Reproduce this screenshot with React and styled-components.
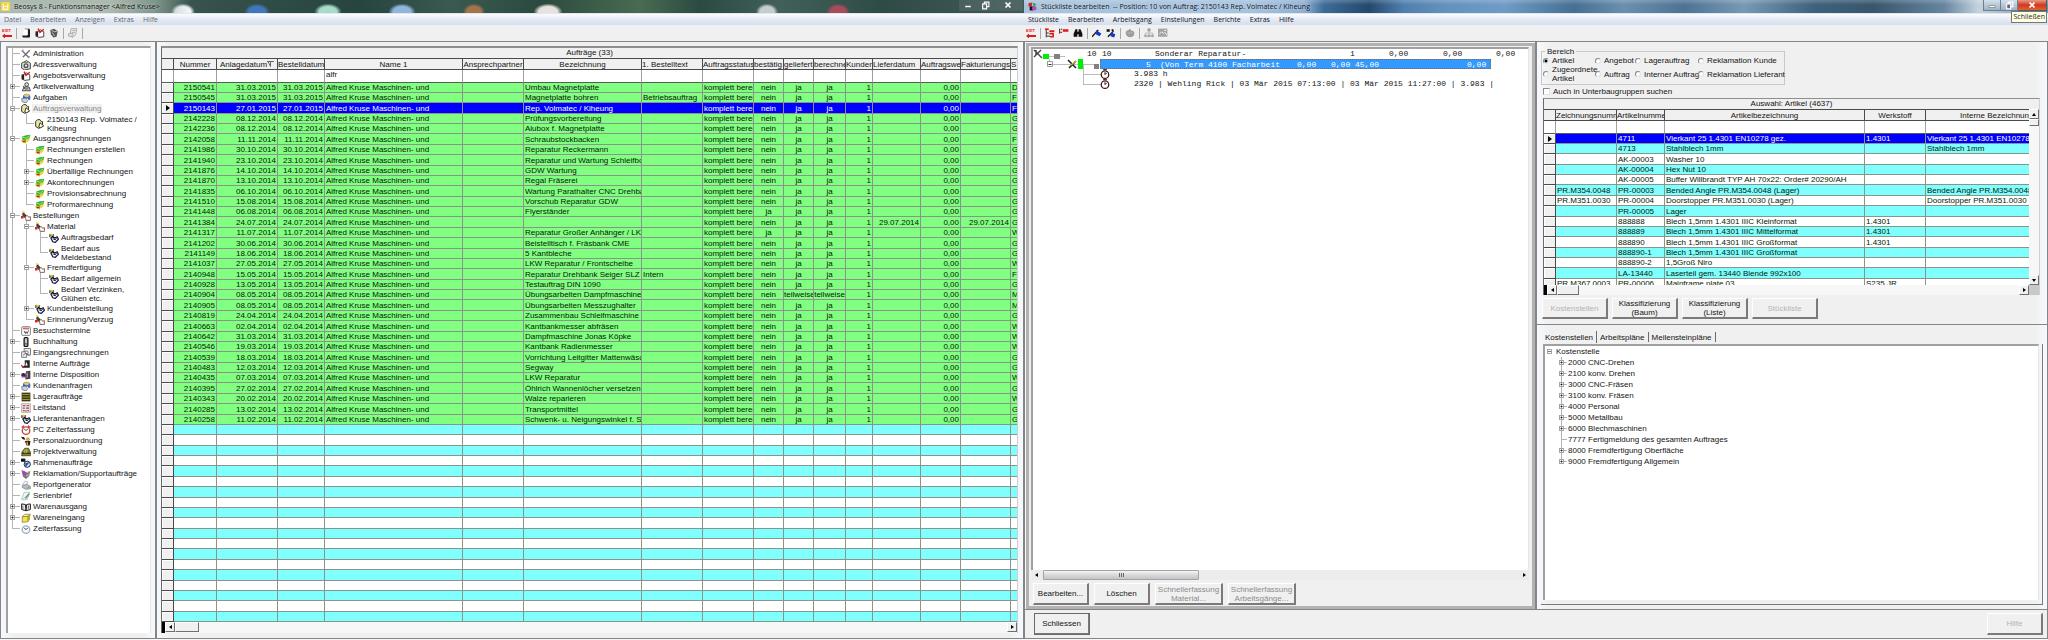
import React from "react";
import styled, { createGlobalStyle, css } from "styled-components";

const GlobalStyle = createGlobalStyle`
  *, *::before, *::after { box-sizing: border-box; }
  html, body { margin: 0; padding: 0; background: #f0f0f0; }
  body, button, input { font-family: "Liberation Sans", Arial, sans-serif; font-size: 8px; line-height: 9px; color: #141414; }
  button { cursor: default; }
`;

/* ---------- window chrome ---------- */

const Desktop = styled.main`
  display: grid;
  grid-template-columns: minmax(0, 1fr) minmax(0, 1fr);
  min-height: 100vh;
`;

const Window = styled.section`
  display: flex;
  flex-direction: column;
  min-width: 0;
  padding-bottom: 1px;
  background: #f4f7fb;
`;

const blob = (x, color, w = 20) =>
  `radial-gradient(ellipse ${w}px 10px at ${x}px 12px, ${color} 0 55%, transparent 85%)`;

const leftGlass = [
  "linear-gradient(90deg, rgba(178,190,178,.95) 0 110px, rgba(150,170,158,.75) 155px, transparent 190px)",
  blob(183, "#f2f6fa", 14),
  blob(257, "#3f77b8", 15),
  blob(328, "#a9dcc8", 16),
  blob(402, "#8fb6dc", 16),
  blob(474, "#a5734a", 13),
  blob(548, "#e7e2de", 17),
  blob(767, "#c3cdd2", 13),
  blob(838, "#a84a58", 14),
  "linear-gradient(90deg, #54706a 0, #35504a 220px, #27443f 360px, #3a5950 450px, #2b4a3f 540px, #4b6a52 640px, #2c4a42 700px, #42605a 780px, #2f4b46 880px, #425a5a 100%)",
].join(",");

const rightGlass = [
  "linear-gradient(180deg, rgba(255,255,255,.2), transparent 5px)",
  "linear-gradient(90deg, #a9c3dc 0, #a5c2df 230px, #8fb0d2 280px, #3d6b98 300px, #24486d 345px, #4f7fae 380px, #6391bd 420px, #6f9cc6 480px, #456f93 550px, #6b8fae 600px, #4d7394 660px, #7899b3 720px, #3e617c 790px, #38566c 850px, #6685a0 920px, #c5d3de 955px, #7691aa 100%)",
].join(",");

const TitleBar = styled.header`
  display: flex;
  align-items: center;
  height: 14px;
  padding-left: ${(p) => (p.$blue ? 4 : 1)}px;
  gap: 4px;
  background: ${(p) => (p.$blue ? rightGlass : leftGlass)};
  border-bottom: 1px solid #dfe7ef;
  h1 {
    margin: 0;
    font: 400 7px/12px "Open Sans", sans-serif;
    color: #0c141c;
    white-space: pre;
    text-shadow: 0 0 3px rgba(255, 255, 255, 0.7);
  }
`;

const Caption = styled.div`
  display: flex;
  align-self: flex-start;
  margin-left: auto;
  margin-right: 1px;
  position: relative;
`;

const CaptionButton = styled.button`
  width: ${(p) => p.$w}px;
  height: 11px;
  padding: 0;
  display: flex;
  align-items: center;
  justify-content: center;
  border: 1px solid ${(p) => (p.$glass ? "#6e8092" : "#4c615f")};
  border-top: 0;
  border-left: ${(p) => (p.$first ? "1px solid #6e8092" : 0)};
  background: ${(p) =>
    p.$danger
      ? "linear-gradient(#e89a86, #cf3a1c 50%, #e2603a)"
      : p.$glass
      ? "linear-gradient(#d5e0ea, #9db3c8)"
      : "rgba(255,255,255,.08)"};
`;

const Tooltip = styled.span`
  position: absolute;
  z-index: 2;
  top: 11px;
  right: 0;
  padding: 0 1px;
  border: 1px solid #767676;
  background: #ffffe1;
  font: 400 7px/10px "Open Sans", sans-serif;
  color: #2a2a2a;
`;

const MenuBar = styled.nav`
  display: flex;
  align-items: center;
  gap: 9px;
  height: 11px;
  padding-left: 4px;
  background: linear-gradient(#fbfcfe, #e6ebf5 45%, #d5ddef);
  button {
    padding: 0;
    border: 0;
    background: none;
    font: 400 7px/11px "Open Sans", sans-serif;
    color: ${(p) => (p.$muted ? "#62676e" : "#10141a")};
  }
`;

const ToolBar = styled.div`
  display: flex;
  align-items: center;
  gap: 4px;
  height: 16px;
  padding-left: 2px;
  background: #f0f0f0;
`;

const ToolButton = styled.button`
  display: flex;
  width: 10px;
  height: 12px;
  padding: 0;
  align-items: center;
  justify-content: center;
  border: 0;
  background: none;
  flex: none;
`;

const ToolSep = styled.span`
  width: 1px;
  height: 11px;
  background: #a8a8a8;
`;

/* ---------- panes ---------- */

const Columns = styled.div`
  display: grid;
  grid-template-columns: ${(p) => p.$cols};
  flex: 1;
  min-width: 0;
`;

const Pane = styled.div`
  display: flex;
  flex-direction: column;
  min-width: 0;
  padding: ${(p) => p.$pad || "4px 5px 5px 4px"};
  border: 1px solid #858585;
  border-bottom-width: ${(p) => (p.$openBottom ? 0 : 1)}px;
  background: linear-gradient(90deg, #f6f9fd, #f0f0f0 12px, #f0f0f0 calc(100% - 12px), #f6f9fd);
`;

const Sunken = styled.div`
  flex: 1;
  min-width: 0;
  border-top: 2px solid #a0a0a0;
  border-left: 2px solid #a0a0a0;
  border-right: 1px solid #e6e6e6;
  background: #fff;
`;

/* ---------- tree ---------- */

const TreeList = styled.ul`
  margin: 0;
  padding: 0;
  list-style: none;
`;

const TreeItem = styled.li`
  display: flex;
  align-items: stretch;
  height: ${(p) => (p.$tall ? 19 : 11)}px;
`;

const line = "#b4b4b4";

const Guide = styled.span`
  flex: none;
  width: ${(p) => p.$w}px;
  background: ${(p) =>
    p.$on ? `linear-gradient(${line}, ${line}) 4px 0 / 1px 100% no-repeat` : "none"};
`;

const Joint = styled.span`
  flex: none;
  display: flex;
  align-items: center;
  width: ${(p) => p.$w || 12}px;
  padding-left: 2px;
  background:
    linear-gradient(${line}, ${line}) 4px 0 / 1px ${(p) => (p.$root ? "0" : p.$last ? "50%" : "100%")} no-repeat,
    linear-gradient(${line}, ${line}) 4px 50% / ${(p) => (p.$root ? 0 : p.$w - 2)}px 1px no-repeat;
`;

const Expander = styled.button`
  width: 5px;
  height: 5px;
  padding: 0;
  border: 1px solid #a4a4a4;
  background:
    ${(p) =>
      p.$open
        ? "linear-gradient(#777, #777) center / 3px 1px no-repeat,"
        : `linear-gradient(#111, #111) center / 1px 1px no-repeat,
           linear-gradient(#999, #999) center / 3px 1px no-repeat,
           linear-gradient(#999, #999) center / 1px 3px no-repeat,`}
    #fff;
`;

const TreeIcon = styled.span`
  flex: none;
  display: flex;
  align-items: center;
  justify-content: center;
  width: 12px;
`;

const TreeLabel = styled.span`
  align-self: center;
  padding: 0 1px;
  white-space: pre;
  ${(p) => p.$selected && css`background: #f0f0f0; color: #8a8a8a;`}
`;

/* ---------- data grid ---------- */

const GridFrame = styled.div`
  display: flex;
  flex-direction: column;
  min-width: 0;
  border-top: ${(p) => (p.$thin ? 1 : 2)}px solid #8e8e8e;
  border-left: 1px solid #6a6a6a;
  border-right: 1px solid #d0d0d0;
  background: #fff;
`;

const GridTitle = styled.div`
  height: 10px;
  line-height: 10px;
  text-align: center;
  background: #f0f0f0;
`;

const GridView = styled.div`
  display: flex;
  min-width: 0;
  ${(p) => p.$h && css`height: ${p.$h}px; overflow: hidden;`}
`;

const Table = styled.table`
  flex: 1;
  width: 100%;
  min-width: 0;
  table-layout: fixed;
  border-collapse: separate;
  border-spacing: 0;
  th, td {
    padding: 0 1px;
    overflow: hidden;
    white-space: nowrap;
    font-weight: 400;
    line-height: 9px;
    text-overflow: clip;
  }
  thead th {
    height: 12px;
    padding: 0;
    border-top: 1px solid #4a4a4a;
    border-bottom: 1px solid #4a4a4a;
    border-right: 1px solid #4a4a4a;
    background: #f0f0f0;
  }
  thead td {
    height: 13px;
    border-right: 1px solid #a0a0a0;
    border-bottom: 1px solid #5a5a5a;
    vertical-align: top;
    background: #fff;
  }
  tbody td, tbody th {
    height: 10px;
    border-right: 1px solid #8a948a;
    border-bottom: 1px solid #8a948a;
  }
  tbody tr:nth-child(8n + 3) td,
  tbody tr:nth-child(8n + 6) td,
  tbody tr:nth-child(8n) td { height: 11px; }
  td:last-child, thead th:last-child { border-right: 0; }
`;

const HeaderCell = styled.th`
  text-align: ${(p) => p.$align || "center"};
`;

const rowColors = { green: "#80ff80", cyan: "#80ffff", white: "#ffffff", blue: "#0000ff" };

const Row = styled.tr`
  td { background: ${(p) => rowColors[p.$tone]}; color: ${(p) => (p.$tone === "blue" ? "#fff" : "#062006")}; }
  && th {
    padding: 0;
    background: #f0f0f0;
    border-right: 1px solid #4a4a4a;
    border-bottom: 1px solid #4a4a4a;
    box-shadow: inset 1px 1px #fff;
  }
`;

const Cell = styled.td`
  text-align: ${(p) => p.$align || "left"};
  && { padding: ${(p) => (p.$align === "center" ? "0" : p.$align === "right" ? "0 1px 0 0" : "0 0 0 1px")}; }
`;

const FilterInput = styled.input`
  display: block;
  width: 100%;
  height: 9px;
  padding: 0;
  border: 0;
  outline: 0;
  background: none;
`;

const Pointer = styled.i`
  display: block;
  width: 0;
  margin-left: 4px;
  border: 3px solid transparent;
  border-left: 4px solid #000;
  border-right: 0;
`;

/* ---------- scroll bars ---------- */

const HBar = styled.div`
  display: flex;
  height: ${(p) => p.$h || 11}px;
  background: ${(p) => (p.$modern ? "#ececec" : "#f7f7f7")};
`;

const BarCap = styled.span`
  width: 3px;
  background: #000;
`;

const raised = css`
  border: 1px solid #fff;
  border-right-color: #6f6f6f;
  border-bottom-color: #6f6f6f;
  background: #f0f0f0;
`;

const Arrow = styled.button`
  display: flex;
  flex: none;
  align-items: center;
  justify-content: center;
  width: 10px;
  height: 10px;
  padding: 0;
  ${(p) => (p.$flat ? css`border: 0; background: none;` : raised)}
  &::before {
    content: "";
    border: 2px solid transparent;
    ${(p) => p.$dir === "left" && css`border-right: 3px solid #000; border-left: 0;`}
    ${(p) => p.$dir === "right" && css`border-left: 3px solid #000; border-right: 0;`}
    ${(p) => p.$dir === "up" && css`border-bottom: 3px solid #000; border-top: 0;`}
    ${(p) => p.$dir === "down" && css`border-top: 3px solid #000; border-bottom: 0;`}
  }
`;

const Thumb = styled.span`
  width: ${(p) => p.$w}px;
  height: ${(p) => p.$h || 10}px;
  ${(p) =>
    p.$modern
      ? css`
          display: flex;
          align-items: center;
          justify-content: center;
          gap: 1px;
          margin-left: 2px;
          border: 1px solid #a3a3a3;
          border-radius: 1px;
          background: linear-gradient(#f5f5f5, #d9d9dc 50%, #c4c4c9);
          i { width: 1px; height: 4px; background: #666; }
        `
      : raised}
`;

const Grow = styled.span`
  flex: 1;
`;

const Corner = styled.span`
  width: 10px;
  background: #c8c8c8;
`;

const VBar = styled.div`
  display: flex;
  flex-direction: column;
  width: 10px;
  background: #f7f7f7;
`;

/* ---------- buttons, form ---------- */

const PushButton = styled.button`
  width: ${(p) => p.$w}px;
  height: ${(p) => p.$h || 22}px;
  padding: 0;
  border: 1px solid #fff;
  border-right: 2px solid #7a7a7a;
  border-bottom: 2px solid #7a7a7a;
  background: #f0f0f0;
  text-align: center;
  color: ${(p) => (p.$faint ? "#b4b4b4" : p.$dim ? "#8c8c8c" : "#141414")};
  white-space: pre;
  ${(p) => p.$default && css`outline: 1px solid #6a6a6a; outline-offset: -1px;`}
`;

const ButtonRow = styled.div`
  display: flex;
  gap: ${(p) => p.$gap}px;
  padding: ${(p) => p.$pad};
`;

const GrayFrame = styled.div`
  display: flex;
  flex-direction: column;
  flex: 1;
  min-width: 0;
  padding: 1px 3px 1px 2px;
  border: 3px solid #b2b2b2;
  background: #f0f0f0;
`;

const Fieldset = styled.fieldset`
  display: grid;
  grid-template-columns: 52px 40px 63px 85px;
  grid-template-rows: 9px 18px;
  align-items: center;
  width: 244px;
  height: 38px;
  margin: 0;
  padding: 0 1px;
  border: 1px solid #c8c8c8;
  legend { padding: 0 2px; margin-left: 2px; line-height: 9px; }
`;

const Choice = styled.label`
  display: flex;
  align-items: center;
  gap: 3px;
  white-space: pre;
  input {
    appearance: none;
    flex: none;
    width: ${(p) => (p.$box ? 7 : 6)}px;
    height: ${(p) => (p.$box ? 7 : 6)}px;
    margin: 0;
    border: 1px solid #8a8a8a;
    border-right-color: #e4e4e4;
    border-bottom-color: #e4e4e4;
    border-radius: ${(p) => (p.$box ? 0 : "50%")};
    background: #fff;
  }
  input:checked { background: radial-gradient(circle, #000 0 1px, #fff 2px); }
`;

const Tabs = styled.div`
  display: flex;
  align-items: center;
  height: 14px;
  padding-left: 1px;
`;

const Tab = styled.button`
  height: ${(p) => (p.$active ? 12 : 10)}px;
  padding: 0 3px;
  border: 0;
  border-right: 1px solid #6a6a6a;
  background: none;
`;

const TabPage = styled.div`
  display: flex;
  flex: 1;
  padding: 0 3px 4px 2px;
  border-right: 1px solid #7a7a7a;
  border-bottom: 1px solid #7a7a7a;
`;

const Footer = styled.footer`
  display: flex;
  justify-content: space-between;
  padding: 3px 4px 3px 9px;
  border: 1px solid #858585;
  background: #f0f0f0;
`;

/* ---------- parts list ---------- */

const PartRow = styled.div`
  display: flex;
  align-items: center;
  height: 10px;
  font: 400 8px/10px "Liberation Mono", "Courier New", monospace;
  white-space: pre;
`;

const PartLead = styled.span`
  flex: none;
  display: flex;
  width: ${(p) => p.$w}px;
  svg { flex: none; overflow: visible; }
`;

const PartText = styled.span`
  flex: none;
  width: ${(p) => (p.$w ? `${p.$w}px` : "auto")};
`;

const PartSelected = styled.span`
  display: flex;
  width: 391px;
  height: 10px;
  padding-left: 45px;
  background: #3399ff;
  border: 1px dotted #7a6a50;
  line-height: 9px;
  color: #fff;
`;

/* ---------- icons ---------- */

const Svg = ({ children, size = 10, w, h, box = "0 0 16 16" }) => (
  <svg width={w || size} height={h || size} viewBox={box} aria-hidden="true">
    {children}
  </svg>
);

const folder = (
  <g stroke="#222" strokeWidth="1.4">
    <path d="M1 4l3-3h4l2 3h2v8l-6 3-5-3z" fill="#e9e3a0" />
    <path d="M8 6l6 5-5 3-3-1z" fill="#fffbd0" />
  </g>
);
const money = (
  <g>
    <path d="M1 8l7 1v6l-5-1-2-2z" fill="#e0a92c" />
    <path d="M2 4l6-2 7-1-2 7-6 3-5-3z" fill="#35b32c" />
    <path d="M7 9l6-3 1 3-5 5z" fill="#f0cf4a" />
    <path d="M3 5l5 2 5-4" stroke="#a8ea86" fill="none" strokeWidth="1.5" />
    <path d="M3 12h4" stroke="#8b2f18" strokeWidth="1.5" />
  </g>
);
const order = (
  <g>
    <path d="M3 3l5 5" stroke="#222" fill="none" strokeWidth="2.4" />
    <path d="M1 5h5l2 4-3 2z" fill="#444" />
    <path d="M0 8h4v4H0z" fill="#d22" />
    <path d="M7 9l3-2 2 3 3-1v6H8z" fill="#fff" stroke="#7a3a3a" strokeWidth="1.3" />
    <path d="M2 1l4 2" stroke="#e0c82a" strokeWidth="2" />
  </g>
);
const hands = (
  <g>
    <path d="M3 8l3 6 4 1 5-5-2-4-4 2-3-2z" fill="#fff" stroke="#16184e" strokeWidth="2" />
    <path d="M0 5l8-2M1 2l8 6" stroke="#111" strokeWidth="1.8" />
    <path d="M1 1h4l2 3-4 1z" fill="#d8cf2e" />
    <path d="M6 9l4 2 2-3" stroke="#111" fill="none" strokeWidth="1.4" />
  </g>
);
const globe = (
  <g>
    <circle cx="9" cy="7" r="6" fill="#3d67c9" />
    <path d="M4 3l5-2 5 2-3 4-5-1z" fill="#e9c34c" />
    <path d="M1 9l6-1 4 4-3 4-6-2z" fill="#c9d4e6" stroke="#555" />
    <path d="M9 9l4 4" stroke="#f4f4f4" strokeWidth="2" />
  </g>
);
const clock = (ring) => (
  <g>
    <circle cx="8" cy="9" r="6" fill="#f6fbff" stroke={ring} strokeWidth="2.2" />
    <path d="M5 6l3 3 3-3" stroke="#234" fill="none" strokeWidth="1.5" />
  </g>
);
const drawer = (
  <g>
    <path d="M2 7l7-4 5 3v8l-8 1-4-2z" fill="#fff" stroke="#222" strokeWidth="1.3" />
    <path d="M5 1l3 6 6-5" stroke="#c22" strokeWidth="2.4" fill="none" />
    <path d="M1 5l4 1v8l-4-1z" fill="#222" />
  </g>
);

const icons = {
  tools: (
    <g stroke="#666" strokeWidth="2" fill="none">
      <path d="M2 3l11 11M14 2L3 13" />
      <path d="M1 4l3-3M11 14l3-2" stroke="#999" />
    </g>
  ),
  address: (
    <g>
      <path d="M1 5l8-4 6 4v9l-9 2-5-3z" fill="#ddd" stroke="#222" strokeWidth="1.3" />
      <circle cx="8" cy="9" r="4" fill="#555" />
      <circle cx="8" cy="9" r="1.7" fill="#eee" />
      <path d="M3 4h8" stroke="#5a9e38" strokeWidth="1.5" />
    </g>
  ),
  offer: drawer,
  article: (
    <g stroke="#333" strokeWidth="1.4" fill="#ddd">
      <circle cx="9" cy="4" r="3" />
      <path d="M5 8h8l2 6H2z" />
      <path d="M3 6l4 6M7 11h5" fill="none" />
    </g>
  ),
  globe,
  folder,
  money,
  order,
  hands,
  calendar: (
    <g>
      <rect x="1" y="1" width="14" height="14" rx="2" fill="#fff" stroke="#888" strokeWidth="1.6" />
      <path d="M3 4h10" stroke="#d66" strokeWidth="3" />
      <path d="M5 8l2 4 1-3 2 3 2-5" stroke="#444" fill="none" strokeWidth="1.4" />
    </g>
  ),
  book: (
    <g>
      <rect x="5" y="1" width="6" height="14" rx="1.5" fill="#c9c9c9" stroke="#111" strokeWidth="2" />
      <path d="M7 11h2" stroke="#111" strokeWidth="2" />
    </g>
  ),
  invoice: (
    <g stroke="#555" strokeWidth="1.2" fill="#eee">
      <rect x="5" y="1" width="10" height="10" />
      <path d="M1 6h8v9H1z" />
      <circle cx="9" cy="7" r="2.4" fill="#fff" />
      <path d="M3 12l5-4 6 5" fill="none" />
    </g>
  ),
  internal: (
    <g>
      <path d="M6 2h8v12H1l5-4z" fill="#222" />
      <path d="M8 4l3 6-4 1z" fill="#eee" />
      <path d="M0 10l5 4" stroke="#b22" strokeWidth="2" />
    </g>
  ),
  disposition: (
    <g>
      <path d="M8 2l7-1v13l-8 1z" fill="#444" />
      <path d="M1 5h8v7H1z" fill="#8f4d8a" />
      <path d="M3 5l4 5M0 8h5" stroke="#111" strokeWidth="1.6" />
      <path d="M10 4v8" stroke="#eee" />
    </g>
  ),
  shelf: (
    <g>
      <path d="M1 1h14v14H1z" fill="#3b3b16" />
      <path d="M2 4h12M2 8h12M2 12h12" stroke="#98973b" strokeWidth="1.6" />
    </g>
  ),
  board: (
    <g>
      <path d="M1 1h14v14H1z" fill="#f3dede" stroke="#a88" />
      <path d="M3 4h4M9 4h4M3 12h3M10 12h3" stroke="#d44" strokeWidth="2" />
      <path d="M3 8h3M8 8h5" stroke="#46a" strokeWidth="2" />
      <path d="M8 11v3" stroke="#4a4" strokeWidth="2" />
    </g>
  ),
  alarm: (
    <g>
      {clock("#d4452f")}
      <path d="M1 4l4-3M15 4l-4-3" stroke="#b33" strokeWidth="2" />
    </g>
  ),
  person: (
    <g>
      <path d="M0 1l5 1 2 4-4-1z" fill="#111" />
      <circle cx="11" cy="5" r="3" fill="#e1a24c" />
      <path d="M6 8h9l-1 7H9z" fill="#222" />
      <path d="M10 9v6" stroke="#e8b93a" strokeWidth="2" />
    </g>
  ),
  project: (
    <g>
      <path d="M2 7l4-5h6l3 6v6H1z" fill="#8b8a24" stroke="#222" />
      <path d="M1 10h14" stroke="#111" strokeWidth="1.5" />
      <path d="M6 4v6M9 3v7" stroke="#d9d785" />
    </g>
  ),
  frame: (
    <g>
      <path d="M0 1h7v5H0z" fill="#111" />
      <circle cx="10" cy="10" r="5" fill="#bfe3f3" stroke="#111" strokeWidth="1.4" />
      <path d="M8 12l4-5M8 8v5" stroke="#1b3bd0" strokeWidth="2" />
    </g>
  ),
  claim: (
    <g>
      <path d="M1 2l7 3 7-2-2 8-5 5-5-4z" fill="#777" />
      <path d="M1 2l6 2 1 5-4 1z" fill="#b338c4" />
      <path d="M9 6l5-2M8 11l4-2" stroke="#ccc" strokeWidth="1.6" />
    </g>
  ),
  printer: (
    <g>
      <path d="M2 8l4-6 5 1-2 5z" fill="#eaf2fa" stroke="#98a7b8" />
      <path d="M2 9l8-2 5 3v4l-7 1-6-3z" fill="#b9bcc0" stroke="#777" />
      <circle cx="12" cy="12" r="1.2" fill="#4a4" />
    </g>
  ),
  letter: (
    <g>
      <path d="M5 2h9l-4 12H1z" fill="#f4f6f8" stroke="#9aa" />
      <path d="M13 4l-6 8" stroke="#3da04a" strokeWidth="2" />
      <path d="M3 13l8-8" stroke="#a0b4d8" />
    </g>
  ),
  openbook: (
    <g stroke="#222" strokeWidth="1.6" fill="#e8e8e8">
      <path d="M1 3l6 1 1 10-7-2zM15 3L9 4 8 14l7-2z" />
      <path d="M3 6v5M12 6v5" stroke="#777" />
    </g>
  ),
  box: (
    <g>
      <path d="M2 6l9-1v9l-9 1z" fill="#efe35a" stroke="#7a6b12" />
      <path d="M11 5l4-3-1 9-3 3z" fill="#b9a727" />
      <path d="M2 6l4-4 9 0-4 3z" fill="#fff9b0" stroke="#7a6b12" />
    </g>
  ),
  clock: clock("#9fb0bf"),
};

const ExitIcon = () => (
  <Svg box="0 0 10 11" w={10} h={11}>
    <text x="0" y="4" fontSize="4" fontWeight="700" fontFamily="Liberation Sans" fill="#e01818">EXIT</text>
    <path d="M0 8l3-2.500v1.500h7v2H3v1.500z" fill="#e01818" />
  </Svg>
);

const toolIcons = {
  book: (
    <g>
      <path d="M6 1h8v13H2v-3h4z" fill="#222" />
      <path d="M4 2h7v9l-2 1H1l3-3z" fill="#fff" />
      <path d="M13 3v11H3" stroke="#111" strokeWidth="2" fill="none" />
    </g>
  ),
  offer: drawer,
  bin: (
    <g>
      <path d="M2 3l6-2 6 4-2 9-5 1-4-5z" fill="#555" />
      <path d="M4 4l5 2 4-1M5 7l4 6" stroke="#ccc" fill="none" strokeWidth="1.4" />
    </g>
  ),
  sheet: (
    <g fill="#eee" stroke="#aaa" strokeWidth="1.5">
      <path d="M5 1h9l-2 10-4 4-5-2z" />
      <path d="M1 9h7v4H1zM7 4h5M6 7h5" />
    </g>
  ),
  treeAdd: (
    <g>
      <path d="M2 1v14M2 8h4M2 13h6" stroke="#222" strokeWidth="1.4" fill="none" />
      <path d="M0 2h6M7 5h8M7 9h6v5H8" stroke="#e01818" strokeWidth="2.6" fill="none" />
    </g>
  ),
  flag: (
    <g>
      <path d="M1 1v8M3 2h2" stroke="#222" strokeWidth="1.5" />
      <path d="M6 2h9v4H6z" fill="#e01818" />
      <path d="M2 7h3" stroke="#e01818" strokeWidth="2" />
    </g>
  ),
  binoculars: (
    <g fill="#111">
      <path d="M4 2h3v12H1V9zM12 2H9v12h6V9z" />
      <path d="M6 6h4v4H6z" />
    </g>
  ),
  pin: (
    <g>
      <path d="M0 14L10 3" stroke="#111" strokeWidth="2" />
      <path d="M7 3l8 6-3 4-6-3z" fill="#1438c8" />
    </g>
  ),
  pinBlocks: (
    <g>
      <path d="M1 2h5v4H1zM9 2h3v3H9z" fill="#111" />
      <path d="M3 14L12 5" stroke="#111" strokeWidth="2" />
      <path d="M8 7l7 3-2 5-6-2z" fill="#1438c8" />
    </g>
  ),
  grab: (
    <g>
      <path d="M1 8c0-5 5-4 7-7l2 3c5 0 6 5 4 8-3 4-12 4-13-4z" fill="#9d9d9d" />
      <path d="M4 8h8" stroke="#ccc" />
    </g>
  ),
  org: (
    <g fill="#a5a5a5" stroke="#a5a5a5">
      <path d="M6 1h4v4H6zM1 11h3v3H1zM6 11h4v3H6zM12 11h3v3h-3z" />
      <path d="M8 5v6M2 11V8h12v3" fill="none" />
    </g>
  ),
  photo: (
    <g>
      <path d="M0 1h15v13H0z" fill="#a5a5a5" />
      <path d="M2 10l4-4 3 3 2-2 3 4M10 4h3" stroke="#eee" fill="none" strokeWidth="1.6" />
    </g>
  ),
};

const MinGlyph = () => (
  <Svg size={8}><path d="M2 9h12v4H2z" fill="#fff" stroke="#555" /></Svg>
);
const RestoreGlyph = () => (
  <Svg size={9}><path d="M6 2h8v8H6z" fill="none" stroke="#fff" strokeWidth="2" /><path d="M3 5h7v9H3z" fill="#667" stroke="#fff" strokeWidth="2" /></Svg>
);
const CloseGlyph = () => (
  <Svg size={8}><path d="M3 3l10 10M13 3L3 13" stroke="#fff" strokeWidth="3.500" /></Svg>
);

const SortMark = () => (
  <svg width="7" height="6" viewBox="0 0 7 6" aria-hidden="true">
    <path d="M0 0.500h7M1 0.500l2.500 5v-5l2 0" fill="none" stroke="#666" />
  </svg>
);

/* ---------- data ---------- */

const navTree = [
  [0, "tools", "Administration"],
  [0, "address", "Adressverwaltung"],
  [0, "offer", "Angebotsverwaltung"],
  [0, "article", "Artikelverwaltung", "+"],
  [0, "globe", "Aufgaben"],
  [0, "folder", "Auftragsverwaltung", "-", true],
  [1, "folder", "2150143 Rep. Volmatec /\nKiheung"],
  [0, "money", "Ausgangsrechnungen", "-"],
  [1, "money", "Rechnungen erstellen"],
  [1, "money", "Rechnungen"],
  [1, "money", "Überfällige Rechnungen", "+"],
  [1, "money", "Akontorechnungen", "+"],
  [1, "money", "Provisionsabrechnung"],
  [1, "money", "Proformarechnung"],
  [0, "order", "Bestellungen", "-"],
  [1, "order", "Material", "-"],
  [2, "hands", "Auftragsbedarf"],
  [2, "hands", "Bedarf aus\nMeldebestand"],
  [1, "order", "Fremdfertigung", "-"],
  [2, "hands", "Bedarf allgemein"],
  [2, "hands", "Bedarf Verzinken,\nGlühen etc."],
  [1, "hands", "Kundenbeistellung", "+"],
  [1, "order", "Erinnerung/Verzug"],
  [0, "calendar", "Besuchstermine"],
  [0, "book", "Buchhaltung", "+"],
  [0, "invoice", "Eingangsrechnungen"],
  [0, "internal", "Interne Aufträge"],
  [0, "disposition", "Interne Disposition", "+"],
  [0, "globe", "Kundenanfragen"],
  [0, "shelf", "Lageraufträge", "+"],
  [0, "board", "Leitstand", "+"],
  [0, "hands", "Lieferantenanfragen", "+"],
  [0, "alarm", "PC Zeiterfassung"],
  [0, "person", "Personalzuordnung"],
  [0, "project", "Projektverwaltung"],
  [0, "frame", "Rahmenaufträge", "+"],
  [0, "claim", "Reklamation/Supportaufträge", "+"],
  [0, "printer", "Reportgenerator"],
  [0, "letter", "Serienbrief"],
  [0, "openbook", "Warenausgang", "+"],
  [0, "box", "Wareneingang", "+"],
  [0, "clock", "Zeiterfassung"],
].map(([level, icon, label, toggle, selected]) => ({ level, icon, label, toggle, selected }));

const costTree = [
  { level: 0, label: "Kostenstelle", toggle: "-", root: true },
  ...[
    "2000 CNC-Drehen", "2100 konv. Drehen", "3000 CNC-Fräsen", "3100 konv. Fräsen", "4000 Personal",
    "5000 Metallbau", "6000 Blechmaschinen", "7777 Fertigmeldung des gesamten Auftrages",
    "8000 Fremdfertigung Oberfläche", "9000 Fremdfertigung Allgemein",
  ].map((label) => ({ level: 1, label, toggle: label.startsWith("7777") ? undefined : "+" })),
];

/* name, width, cell alignment, header alignment */
const orderColumns = [
  ["Nummer", 43, "right"], ["Anlagedatum", 61, "right"], ["Bestelldatum", 47, "right"], ["Name 1", 138],
  ["Ansprechpartner", 61], ["Bezeichnung", 118], ["1. Bestelltext", 61, "left", "left"],
  ["Auftragsstatus", 51, "left", "left"], ["bestätig", 30, "center", "left"], ["geliefert", 30, "center", "left"],
  ["berechne", 32, "center", "left"], ["Kunden", 27, "right", "left"], ["Lieferdatum", 48, "right", "left"],
  ["Auftragswe", 40, "right", "left"], ["Fakturierungs", 50, "right", "left"], ["S", null, "left", "left"],
];

const orders = [
  ["2150541", "31.03.2015", "Umbau Magnetplatte", "D"],
  ["2150545", "31.03.2015", "Magnetplatte bohren", "F", { text: "Betriebsauftrag" }],
  ["2150143", "27.01.2015", "Rep. Volmatec / Kiheung", "F"],
  ["2142228", "08.12.2014", "Prüfungsvorbereitung", "G"],
  ["2142236", "08.12.2014", "Alubox f. Magnetplatte", "G"],
  ["2142058", "11.11.2014", "Schraubstockbacken", "F"],
  ["2141986", "30.10.2014", "Reparatur Reckermann", "G"],
  ["2141940", "23.10.2014", "Reparatur und Wartung Schleifboc", "G"],
  ["2141876", "14.10.2014", "GDW Wartung", "G"],
  ["2141870", "13.10.2014", "Regal Fräserei", "G"],
  ["2141835", "06.10.2014", "Wartung Parathalter CNC Drehban", "G"],
  ["2141510", "15.08.2014", "Vorschub Reparatur GDW", "G"],
  ["2141448", "06.08.2014", "Flyerständer", "G", { ok: "ja" }],
  ["2141384", "24.07.2014", "", "G", { delivery: "29.07.2014" }],
  ["2141317", "11.07.2014", "Reparatur Großer Anhänger / LKW", "W", { ok: "ja" }],
  ["2141202", "30.06.2014", "Beistelltisch f. Fräsbank CME", "G"],
  ["2141149", "18.06.2014", "5 Kantbleche", "G"],
  ["2141037", "27.05.2014", "LKW Reparatur / Frontscheibe", "W"],
  ["2140948", "15.05.2014", "Reparatur Drehbank Seiger SLZ 62", "F", { text: "Intern" }],
  ["2140928", "13.05.2014", "Testauftrag DIN 1090", "G"],
  ["2140904", "08.05.2014", "Übungsarbeiten Dampfmaschine", "M", { done: "teilweise" }],
  ["2140905", "08.05.2014", "Übungsarbeiten Messzughalter", "M"],
  ["2140819", "24.04.2014", "Zusammenbau Schleifmaschine", "G"],
  ["2140663", "02.04.2014", "Kantbankmesser abfräsen", "W"],
  ["2140642", "31.03.2014", "Dampfmaschine Jonas Köpke", "W"],
  ["2140546", "19.03.2014", "Kantbank Radienmesser", "W"],
  ["2140539", "18.03.2014", "Vorrichtung Leitgitter Mattenwäsche", "G"],
  ["2140483", "12.03.2014", "Segway", "G"],
  ["2140435", "07.03.2014", "LKW Reparatur", "W"],
  ["2140395", "27.02.2014", "Öhlrich Wannenlöcher versetzen", "G"],
  ["2140343", "20.02.2014", "Walze reparieren", "W"],
  ["2140285", "13.02.2014", "Transportmittel", "G"],
  ["2140258", "11.02.2014", "Schwenk- u. Neigungswinkel f. Sch", "G"],
].map(([no, date, name, by, o = {}]) => [
  no, date, date, "Alfred Kruse Maschinen- und", "", name, o.text || "", "komplett berec",
  o.ok || "nein", o.done || "ja", o.done || "ja", "1", o.delivery || "", "0,00", o.delivery || "", by,
]);

const orderRows = [
  ...orders.map((cells, i) => ({ cells, tone: i === 2 ? "blue" : "green" })),
  ...Array.from({ length: 19 }, (_, i) => ({ cells: orderColumns.map(() => ""), tone: i % 2 ? "white" : "cyan" })),
];

const articleColumns = [
  ["Zeichnungsnumm", 61, "left", "left"], ["Artikelnumme", 48, "left", "left"], ["Artikelbezeichnung", 200],
  ["Werkstoff", 61], ["Interne Bezeichnun", null, "left", "right"],
];

const articleRows = [
  ["", "4711", "Vierkant 25 1.4301 EN10278 gez.", "1.4301", "Vierkant 25 1.4301 EN10278 g"],
  ["", "4713", "Stahlblech 1mm", "", "Stahlblech 1mm"],
  ["", "AK-00003", "Washer 10", "", ""],
  ["", "AK-00004", "Hex Nut 10", "", ""],
  ["", "AK-00005", "Buffer Willbrandt TYP AH 70x22: Order# 20290/AH", "", ""],
  ["PR.M354.0048", "PR-00003", "Bended Angle PR.M354.0048 (Lager)", "", "Bended Angle PR.M354.0048"],
  ["PR.M351.0030", "PR-00004", "Doorstopper PR.M351.0030 (Lager)", "", "Doorstopper PR.M351.0030"],
  ["", "PR-00005", "Lager", "", ""],
  ["", "888888", "Blech 1,5mm 1.4301 IIIC Kleinformat", "1.4301", ""],
  ["", "888889", "Blech 1,5mm 1.4301 IIIC Mittelformat", "1.4301", ""],
  ["", "888890", "Blech 1,5mm 1.4301 IIIC Großformat", "1.4301", ""],
  ["", "888890-1", "Blech 1,5mm 1.4301 IIIC Großformat", "", ""],
  ["", "888890-2", "1,5Groß Niro", "", ""],
  ["", "LA-13440", "Laserteil gem. 13440 Blende 992x100", "", ""],
  ["PR.M367.0003", "PR-00006", "Mainframe plate 03", "S235 JR", ""],
].map((cells, i) => ({ cells, tone: i === 0 ? "blue" : i % 2 ? "cyan" : "white" }));

/* ---------- composed parts ---------- */

const continues = (items, index, level) => {
  for (let i = index + 1; i < items.length; i += 1) {
    if (items[i].level < level) return false;
    if (items[i].level === level) return true;
  }
  return false;
};

function Tree({ items, indent = 14 }) {
  return (
    <TreeList>
      {items.map((item, index) => (
        <TreeItem key={item.label + index} $tall={item.label.includes("\n")}>
          {Array.from({ length: item.level }, (_, level) => (
            <Guide key={level} $w={indent} $on={continues(items, index, level)} />
          ))}
          <Joint $root={item.root} $last={!continues(items, index, item.level)} $w={item.icon ? 12 : 10}>
            {item.toggle && <Expander $open={item.toggle === "-"} aria-label={`${item.label} umschalten`} />}
          </Joint>
          {item.icon && (
            <TreeIcon>
              <Svg>{icons[item.icon]}</Svg>
            </TreeIcon>
          )}
          <TreeLabel $selected={item.selected}>{item.label}</TreeLabel>
        </TreeItem>
      ))}
    </TreeList>
  );
}

function DataTable({ columns, rows, current, filters = {}, sorted }) {
  return (
    <Table>
      <colgroup>
        <col style={{ width: 12 }} />
        {columns.map(([name, width]) => (
          <col key={name} style={width ? { width } : undefined} />
        ))}
      </colgroup>
      <thead>
        <tr>
          <th />
          {columns.map(([name, , , align]) => (
            <HeaderCell key={name} $align={align}>
              {name}
              {name === sorted && <SortMark />}
            </HeaderCell>
          ))}
        </tr>
        <tr>
          <td />
          {columns.map(([name]) => (
            <td key={name}>
              <FilterInput aria-label={`Filter ${name}`} defaultValue={filters[name] || ""} />
            </td>
          ))}
        </tr>
      </thead>
      <tbody>
        {rows.map((row, r) => (
          <Row key={r} $tone={row.tone}>
            <th>{r === current && <Pointer />}</th>
            {row.cells.map((value, c) => (
              <Cell key={c} $align={columns[c][2]}>{value}</Cell>
            ))}
          </Row>
        ))}
      </tbody>
    </Table>
  );
}

function Tool({ name, icon }) {
  return (
    <ToolButton aria-label={name}>{icon ? <Svg size={10}>{toolIcons[icon]}</Svg> : <ExitIcon />}</ToolButton>
  );
}

function ManagerWindow() {
  return (
    <Window>
      <TitleBar>
        <Svg size={9}>
          <path d="M0 0h16v16H0z" fill="#f2d648" />
          <path d="M4 3v10h8V3M4 8h8" fill="none" stroke="#fffbe0" strokeWidth="2" />
        </Svg>
        <h1>{"Beosys 8 - Funktionsmanager <Alfred Kruse>"}</h1>
        <Caption>
          <CaptionButton $w={18} aria-label="Minimieren"><MinGlyph /></CaptionButton>
          <CaptionButton $w={17} aria-label="Wiederherstellen"><RestoreGlyph /></CaptionButton>
          <CaptionButton $w={29} aria-label="Schließen"><CloseGlyph /></CaptionButton>
        </Caption>
      </TitleBar>
      <MenuBar $muted>
        {["Datei", "Bearbeiten", "Anzeigen", "Extras", "Hilfe"].map((m) => (
          <button key={m}>{m}</button>
        ))}
      </MenuBar>
      <ToolBar>
        <Tool name="Beenden" />
        <ToolSep />
        <Tool name="Verzeichnis" icon="book" />
        <Tool name="Angebote" icon="offer" />
        <Tool name="Löschen" icon="bin" />
        <ToolSep />
        <Tool name="Vorlage" icon="sheet" />
        <ToolSep />
      </ToolBar>
      <Columns $cols="156px minmax(0, 1fr)">
        <Pane $pad="4px 4px 5px 5px">
          <Sunken>
            <Tree items={navTree} />
          </Sunken>
        </Pane>
        <Pane $pad="4px 5px 4px 4px">
          <GridFrame>
            <GridTitle>Aufträge (33)</GridTitle>
            <GridView>
              <DataTable
                columns={orderColumns}
                rows={orderRows}
                current={2}
                filters={{ "Name 1": "alfr" }}
                sorted="Anlagedatum"
              />
            </GridView>
            <HBar>
              <BarCap />
              <Arrow $dir="left" aria-label="Nach links" />
              <Thumb $w={24} />
              <Grow />
              <Arrow $dir="right" aria-label="Nach rechts" />
            </HBar>
          </GridFrame>
        </Pane>
      </Columns>
    </Window>
  );
}

const stopwatch = (
  <g>
    <circle cx="8" cy="9" r="6" fill="#fff" stroke="#401818" strokeWidth="2" />
    <path d="M5 1h6M8 9l3-3M8 5v4" stroke="#401818" strokeWidth="1.6" />
  </g>
);

function PartsList() {
  return (
    <div>
      <PartRow>
        <PartLead $w={54}>
          <svg width="54" height="10" viewBox="0 0 54 10" aria-hidden="true">
            <path d="M1 1l8 8M8 1L1 8M3 1v5" stroke="#444" strokeWidth="1.4" />
            <path d="M10 7.500h22" stroke="#bbb" />
            <path d="M10 5h6v5h-6z" fill="#00ee00" />
            <path d="M21 5h6v5h-6z" fill="#808080" />
          </svg>
        </PartLead>
        <PartText $w={15}>10</PartText>
        <PartText $w={53}>10</PartText>
        <PartText $w={195}>Sonderar Reparatur-</PartText>
        <PartText $w={39}>1</PartText>
        <PartText $w={54}>0,00</PartText>
        <PartText $w={53}>0,00</PartText>
        <PartText>0,00</PartText>
      </PartRow>
      <PartRow>
        <PartLead $w={67}>
          <svg width="67" height="10" viewBox="0 0 67 10" aria-hidden="true">
            <path d="M16.500 0v2M19 5.500h42M50.500 5v5" stroke="#bbb" fill="none" />
            <path d="M14.500 2.500h5v5h-5z" fill="#fff" stroke="#999" />
            <path d="M15.500 5.500h3" stroke="#333" />
            <path d="M35 1l8 8M43 2l-7 7" stroke="#222" strokeWidth="1.6" />
            <path d="M38 6l5-4" stroke="#d8b622" strokeWidth="1.5" />
            <path d="M45 0h5v10h-5z" fill="#00ee00" />
            <path d="M61 5h5v5h-5z" fill="#808080" />
          </svg>
        </PartLead>
        <PartSelected>
          <PartText $w={14}>5</PartText>
          <PartText $w={137}>(Von Term 4100 Facharbeit</PartText>
          <PartText $w={34}>0,00</PartText>
          <PartText $w={24}>0,00</PartText>
          <PartText $w={112}>45,00</PartText>
          <PartText>0,00</PartText>
        </PartSelected>
      </PartRow>
      {["3.983 h", "2320 | Wehling Rick | 03 Mär 2015 07:13:00 | 03 Mär 2015 11:27:00 | 3.983 |"].map((text, i) => (
        <PartRow key={text}>
          <PartLead $w={101}>
            <svg width="101" height="10" viewBox="0 0 101 10" aria-hidden="true">
              <path d={i ? "M50.500 0v5M50 5.500h18" : "M50.500 0v10M50 5.500h18"} stroke="#bbb" fill="none" />
              <svg x="67" y="0" width="10" height="10" viewBox="0 0 16 16">{stopwatch}</svg>
            </svg>
          </PartLead>
          <PartText>{text}</PartText>
        </PartRow>
      ))}
    </div>
  );
}

const Stack = styled.div`
  display: flex;
  flex-direction: column;
  min-width: 0;
`;

const CheckLine = styled.div`
  padding: 2px 0 2px 2px;
`;

const ArticleGrid = styled.div`
  margin: 0 3px 0 2px;
`;

const LowerPane = styled(Pane)`
  flex: 1;
  padding: 5px 4px 4px 4px;
  border-top: 0;
  border-bottom: 0;
`;

const choices = [
  "Artikel", "Angebot", "Lagerauftrag", "Reklamation Kunde",
  "Zugeordnete\nArtikel", "Auftrag", "Interner Auftrag", "Reklamation Lieferant",
];

function PartsWindow() {
  return (
    <Window>
      <TitleBar $blue>
        <Svg size={9}>
          <path d="M1 2l6-1v7H1z" fill="#c22a2a" />
          <path d="M8 1l7 3-5 5z" fill="#3aa53a" />
          <path d="M3 8h6v7H3z" fill="#111" />
          <circle cx="11" cy="11" r="4" fill="#b04ac0" />
        </Svg>
        <h1>{"Stückliste bearbeiten  -- Position: 10 von Auftrag: 2150143 Rep. Volmatec / Kiheung"}</h1>
        <Caption>
          <CaptionButton $w={18} $glass $first aria-label="Minimieren"><MinGlyph /></CaptionButton>
          <CaptionButton $w={17} $glass aria-label="Wiederherstellen"><RestoreGlyph /></CaptionButton>
          <CaptionButton $w={29} $danger aria-label="Fenster schließen"><CloseGlyph /></CaptionButton>
          <Tooltip role="tooltip">Schließen</Tooltip>
        </Caption>
      </TitleBar>
      <MenuBar>
        {["Stückliste", "Bearbeiten", "Arbeitsgang", "Einstellungen", "Berichte", "Extras", "Hilfe"].map((m) => (
          <button key={m}>{m}</button>
        ))}
      </MenuBar>
      <ToolBar>
        <Tool name="Beenden" />
        <ToolSep />
        <Tool name="Struktur" icon="treeAdd" />
        <Tool name="Position" icon="flag" />
        <Tool name="Suchen" icon="binoculars" />
        <ToolSep />
        <Tool name="Markieren" icon="pin" />
        <Tool name="Gruppe markieren" icon="pinBlocks" />
        <ToolSep />
        <Tool name="Greifen" icon="grab" />
        <ToolSep />
        <Tool name="Gliederung" icon="org" />
        <Tool name="Bild" icon="photo" />
      </ToolBar>
      <Columns $cols="minmax(0, 1fr) minmax(0, 1fr)">
        <Pane $pad="1px 0 0 1px" $openBottom>
          <GrayFrame>
            <Sunken>
              <PartsList />
            </Sunken>
            <HBar $modern $h={10}>
              <Arrow $dir="left" $flat aria-label="Nach links" />
              <Thumb $modern $w={156}><i /><i /><i /></Thumb>
              <Grow />
              <Arrow $dir="right" $flat aria-label="Nach rechts" />
            </HBar>
            <ButtonRow $gap={5} $pad="3px 0 0 2px">
              <PushButton $w={56}>Bearbeiten...</PushButton>
              <PushButton $w={56}>Löschen</PushButton>
              <PushButton $w={68} $dim disabled>{"Schnellerfassung\nMaterial..."}</PushButton>
              <PushButton $w={68} $dim disabled>{"Schnellerfassung\nArbeitsgänge..."}</PushButton>
            </ButtonRow>
          </GrayFrame>
        </Pane>
        <Stack>
          <Pane $pad="5px 4px 5px 4px">
            <Fieldset>
              <legend>Bereich</legend>
              {choices.map((name, i) => (
                <Choice key={name}>
                  <input type="radio" name="bereich" defaultChecked={i === 0} />
                  {name}
                </Choice>
              ))}
            </Fieldset>
            <CheckLine>
              <Choice $box>
                <input type="checkbox" />
                Auch in Unterbaugruppen suchen
              </Choice>
            </CheckLine>
            <ArticleGrid>
              <GridFrame $thin>
                <GridTitle>Auswahl: Artikel (4637)</GridTitle>
                <GridView $h={176}>
                  <DataTable columns={articleColumns} rows={articleRows} current={0} />
                  <VBar>
                    <Arrow $dir="up" aria-label="Nach oben" />
                    <Thumb $w={10} $h={7} />
                    <Grow />
                    <Arrow $dir="down" aria-label="Nach unten" />
                  </VBar>
                </GridView>
                <HBar $h={10}>
                  <BarCap />
                  <Arrow $dir="left" aria-label="Nach links" />
                  <Thumb $w={22} />
                  <Grow />
                  <Arrow $dir="right" aria-label="Nach rechts" />
                  <Corner />
                </HBar>
              </GridFrame>
            </ArticleGrid>
            <ButtonRow $gap={4} $pad="3px 0 0 1px">
              <PushButton $w={66} $h={21} $faint disabled>Kostenstellen</PushButton>
              <PushButton $w={66} $h={21}>{"Klassifizierung\n(Baum)"}</PushButton>
              <PushButton $w={66} $h={21}>{"Klassifizierung\n(Liste)"}</PushButton>
              <PushButton $w={66} $h={21} $faint disabled>Stückliste</PushButton>
            </ButtonRow>
          </Pane>
          <LowerPane>
            <Tabs role="tablist">
              <Tab role="tab" $active aria-selected="true">Kostenstellen</Tab>
              <Tab role="tab">Arbeitspläne</Tab>
              <Tab role="tab">Meilensteinpläne</Tab>
            </Tabs>
            <TabPage>
              <Sunken>
                <Tree items={costTree} indent={12} />
              </Sunken>
            </TabPage>
          </LowerPane>
        </Stack>
      </Columns>
      <Footer>
        <PushButton $w={56} $default>Schliessen</PushButton>
        <PushButton $w={56} $faint disabled>Hilfe</PushButton>
      </Footer>
    </Window>
  );
}

export default function App() {
  return (
    <>
      <GlobalStyle />
      <Desktop>
        <ManagerWindow />
        <PartsWindow />
      </Desktop>
    </>
  );
}
